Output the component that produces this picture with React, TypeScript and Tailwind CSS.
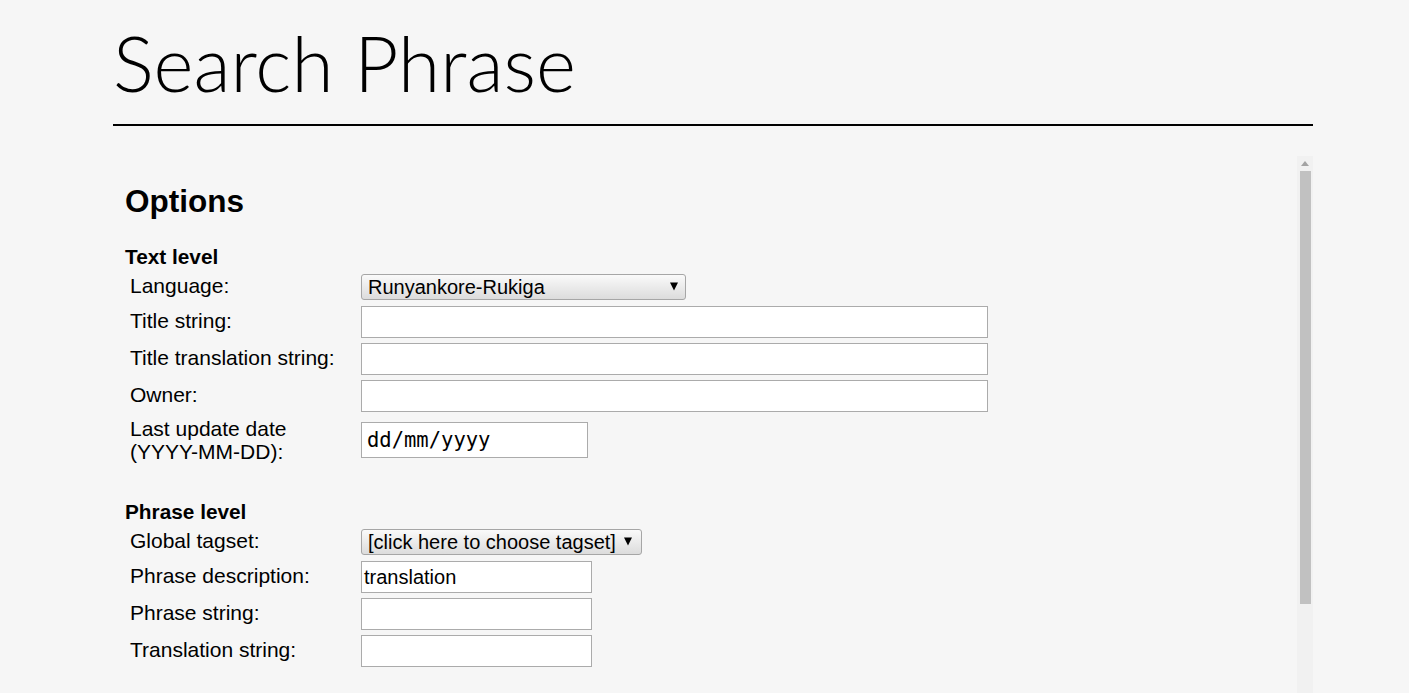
import React from "react";

function Arrow() {
  return (
    <svg width="8" height="9" viewBox="0 0 8 9" className="shrink-0">
      <polygon points="0,0.5 8,0.5 4,8.5" fill="#000" />
    </svg>
  );
}

function Select({ text, width, pr }: { text: string; width: string; pr: string }) {
  return (
    <div
      className={`${width} ${pr} h-[26px] flex items-center justify-between pl-[6px] border border-[#a6a6a6] rounded-[3px] bg-gradient-to-b from-[#fafafa] to-[#dcdcdc] text-[20px] leading-[24px] text-black`}
    >
      <span>{text}</span>
      <Arrow />
    </div>
  );
}

function TextInput({ width, value }: { width: string; value?: string }) {
  return (
    <div
      className={`${width} h-[32px] border border-[#ababab] bg-white flex items-center pl-[2px] text-[20px] leading-[24px] text-black`}
    >
      {value}
    </div>
  );
}

function Row({
  label,
  h,
  children,
}: {
  label: React.ReactNode;
  h: string;
  children: React.ReactNode;
}) {
  return (
    <div className={`flex items-center ${h}`}>
      <div className="w-[236px] pl-[5px] text-[21px] leading-[24px] text-black -mt-[1px]">{label}</div>
      <div>{children}</div>
    </div>
  );
}

export default function App() {
  return (
    <div className="h-[693px] overflow-hidden bg-[#f6f6f6] font-['Liberation_Sans',Arial,sans-serif] text-black">
      <div className="ml-[113px] w-[1200px]">
        <h1 className="pt-[24px] font-['Lato',sans-serif] font-light text-[76.5px] leading-[77px] text-black">
          Search Phrase
        </h1>
        <div className="mt-[23px] h-[2px] bg-black" />
        <div className="mt-[30px] flex">
          <div className="flex-1 pl-[12px] pt-[27px]">
            <h2 className="text-[31.5px] leading-[36px] font-bold">Options</h2>
            <div className="mt-[26px] text-[20.8px] leading-[24px] font-bold">Text level</div>
            <div className="mt-[1px] flex flex-col">
              <Row label="Language:" h="h-[33px]">
                <Select text="Runyankore-Rukiga" width="w-[325px]" pr="pr-[7px]" />
              </Row>
              <Row label="Title string:" h="h-[37px]">
                <TextInput width="w-[627px]" />
              </Row>
              <Row label="Title translation string:" h="h-[37px]">
                <TextInput width="w-[627px]" />
              </Row>
              <Row label="Owner:" h="h-[37px]">
                <TextInput width="w-[627px]" />
              </Row>
              <Row
                label={
                  <div className="leading-[23px]">
                    Last update date
                    <br />
                    (YYYY-MM-DD):
                  </div>
                }
                h="h-[52px]"
              >
                <div className="w-[227px] h-[36px] border border-[#ababab] bg-white flex items-center pl-[5px] font-['DejaVu_Sans_Mono',monospace] text-[20.5px] text-black">
                  dd/mm/yyyy
                </div>
              </Row>
            </div>
            <div className="mt-[34px] text-[20.8px] leading-[24px] font-bold">Phrase level</div>
            <div className="mt-[1px] flex flex-col">
              <Row label="Global tagset:" h="h-[33px]">
                <Select text="[click here to choose tagset]" width="w-[281px]" pr="pr-[9px]" />
              </Row>
              <Row label="Phrase description:" h="h-[37px]">
                <TextInput width="w-[231px]" value="translation" />
              </Row>
              <Row label="Phrase string:" h="h-[37px]">
                <TextInput width="w-[231px]" />
              </Row>
              <Row label="Translation string:" h="h-[37px]">
                <TextInput width="w-[231px]" />
              </Row>
            </div>
          </div>
          <div className="w-[16px] h-[600px] bg-[#f1f1f1] flex flex-col">
            <div className="h-[15px] flex items-center justify-center">
              <svg width="8" height="5" viewBox="0 0 8 5">
                <polygon points="4,0 8,5 0,5" fill="#a3a3a3" />
              </svg>
            </div>
            <div className="ml-[3px] w-[11px] h-[433px] bg-[#c1c1c1]" />
          </div>
        </div>
      </div>
    </div>
  );
}
